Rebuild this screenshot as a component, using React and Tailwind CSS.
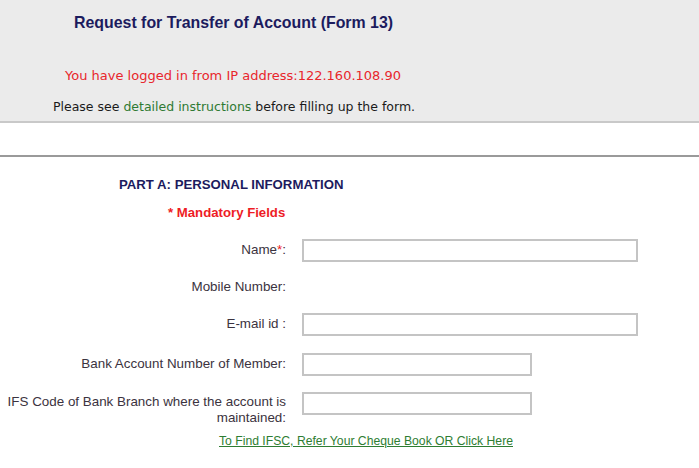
export default function App() {
  const label = "text-[13.4px] text-[#3b3340] text-right";
  return (
    <div className="w-[699px] h-[468px] bg-white overflow-hidden" style={{ fontFamily: '"Liberation Sans", Arial, sans-serif' }}>
      <div className="h-[123px] bg-[#ebebeb] border-b-2 border-[#c9c9c9] relative">
        <div className="pt-[14px] pl-[74px] text-[15.9px] font-bold text-[#1c1b5e] leading-[18px]">
          Request for Transfer of Account (Form 13)
        </div>
        <div className="mt-[36px] pl-[65px] text-[13px] text-[#e8262c] leading-[16px]" style={{ fontFamily: '"DejaVu Sans", Verdana, sans-serif' }}>
          You have logged in from IP address:122.160.108.90
        </div>
        <div className="mt-[15px] pl-[53px] text-[12.5px] text-[#1a1a1a] leading-[16px]" style={{ fontFamily: '"DejaVu Sans", Verdana, sans-serif' }}>
          Please see <span className="text-[#2f7a33]">detailed instructions</span> before filling up the form.
        </div>
      </div>
      <div className="h-[34px] border-b-2 border-[#9a9a9a]" />
      <div className="flex flex-col">
        <div className="mt-[20px] h-[16px] pl-[119px] text-[13.2px] font-bold text-[#1c1b5e] leading-[16px]">
          PART A: PERSONAL INFORMATION
        </div>
        <div className="mt-[12px] h-[16px] pl-[168px] text-[13.2px] font-bold text-[#ee1c25] leading-[16px]">
          * Mandatory Fields
        </div>
        <div className="mt-[18px] h-[22px] flex items-center">
          <div className={`w-[286px] ${label}`}>Name<span className="text-[#ee1c25]">*</span>:</div>
          <input className="ml-[16px] w-[336px] h-[23px] border-2 border-[#c4c4c4] bg-white outline-none" />
        </div>
        <div className="mt-[15px] h-[22px] flex items-center">
          <div className={`w-[286px] ${label}`}>Mobile Number:</div>
        </div>
        <div className="mt-[15px] h-[22px] flex items-center">
          <div className={`w-[286px] ${label}`}>E-mail id :</div>
          <input className="ml-[16px] w-[336px] h-[23px] border-2 border-[#c4c4c4] bg-white outline-none" />
        </div>
        <div className="mt-[18px] h-[22px] flex items-center">
          <div className={`w-[286px] ${label}`}>Bank Account Number of Member:</div>
          <input className="ml-[16px] w-[230px] h-[23px] border-2 border-[#c4c4c4] bg-white outline-none" />
        </div>
        <div className="mt-[17px] flex items-start">
          <div className={`w-[286px] pl-[2px] leading-[16px] pt-[2px] ${label}`}>IFS Code of Bank Branch where the account is maintained:</div>
          <input className="ml-[16px] w-[230px] h-[23px] border-2 border-[#c4c4c4] bg-white outline-none" />
        </div>
        <div className="mt-[8px] pl-[219px] text-[12.2px] leading-[14px]">
          <a className="text-[#2e7d32] underline">To Find IFSC, Refer Your Cheque Book OR Click Here</a>
        </div>
      </div>
    </div>
  );
}
